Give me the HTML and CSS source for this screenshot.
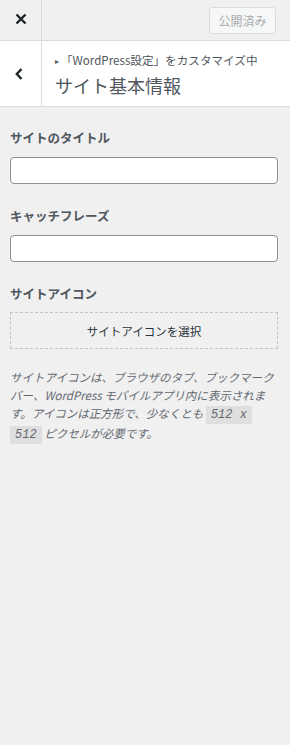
FILE: index.html
```html
<!DOCTYPE html>
<html lang="ja">
<head>
<meta charset="utf-8">
<link rel="stylesheet" href="styles.css">
</head>
<body>
<div class="sidebar">
  <header class="topbar">
    <button class="close-btn" aria-label="閉じる">
      <svg width="14" height="14" viewBox="0 0 14 14"><path d="M2.5 2.5 L11.5 11.5 M11.5 2.5 L2.5 11.5" stroke="#1d2327" stroke-width="2.4" stroke-linecap="butt"/></svg>
    </button>
    <div class="topbar-actions">
      <button class="publish-btn" disabled>公開済み</button>
    </div>
  </header>
  <div class="section-head">
    <button class="back-btn" aria-label="戻る">
      <svg width="10" height="14" viewBox="0 0 10 14"><path d="M7.5 2 L2.8 7 L7.5 12" fill="none" stroke="#1d2327" stroke-width="2.4"/></svg>
    </button>
    <div class="section-title">
      <div class="action"><span class="tri">▸</span>「WordPress設定」をカスタマイズ中</div>
      <h3>サイト基本情報</h3>
    </div>
  </div>
  <div class="controls">
    <div class="control">
      <label class="ctl-label">サイトのタイトル</label>
      <input class="ctl-input" type="text">
    </div>
    <div class="control">
      <label class="ctl-label">キャッチフレーズ</label>
      <input class="ctl-input" type="text">
    </div>
    <div class="control">
      <label class="ctl-label">サイトアイコン</label>
      <div class="upload">サイトアイコンを選択</div>
      <p class="desc">サイトアイコンは、ブラウザのタブ、ブックマークバー、WordPress モバイルアプリ内に表示されます。アイコンは正方形で、少なくとも <code>512 x</code> <code>512</code> ピクセルが必要です。</p>
    </div>
  </div>
</div>
</body>
</html>
```
FILE: styles.css
```css
* { box-sizing: border-box; }
html, body { margin: 0; padding: 0; }
body {
  width: 290px;
  height: 745px;
  background: #f0f0f1;
  font-family: "Noto Sans CJK JP", "Noto Sans", sans-serif;
  color: #2c3338;
  overflow: hidden;
}
.sidebar { display: flex; flex-direction: column; height: 745px; }
.topbar {
  display: flex;
  height: 41px;
  border-bottom: 1px solid #dcdcde;
  background: #f0f0f1;
}
.close-btn {
  width: 42px;
  height: 40px;
  border: 0;
  border-right: 1px solid #dcdcde;
  background: transparent;
  display: flex;
  align-items: center;
  justify-content: center;
  padding: 0 0 2px 0;
}
.topbar-actions {
  flex: 1;
  display: flex;
  justify-content: flex-end;
  align-items: flex-start;
  padding: 7px 14px 0 0;
}
.publish-btn {
  font-family: inherit;
  font-size: 12px;
  color: #a7aaad;
  background: #f6f7f7;
  border: 1px solid #dcdcde;
  border-radius: 3px;
  height: 27px;
  width: 67px;
  padding: 0;
  line-height: 24px;
}
.section-head {
  display: flex;
  height: 66px;
  background: #fff;
  border-bottom: 1px solid #dcdcde;
}
.back-btn {
  width: 42px;
  border: 0;
  border-right: 1px solid #dcdcde;
  background: transparent;
  display: flex;
  align-items: center;
  justify-content: center;
  padding: 0 4px 0 0;
}
.section-title { padding: 10px 0 0 13px; }
.action {
  font-size: 11.6px;
  line-height: 18px;
  color: #50575e;
}
.tri { font-size: 8px; margin-right: 2px; position: relative; top: -1px; }
.section-title h3 {
  margin: 1px 0 0 0;
  font-size: 18px;
  font-weight: 400;
  line-height: 26px;
  color: #50575e;
}
.controls { padding: 22px 12px 0 10px; }
.control { margin-bottom: 23px; }
.ctl-label {
  display: block;
  font-size: 12.5px;
  font-weight: 700;
  line-height: 18px;
  color: #50575e;
  margin-bottom: 10px;
}
.ctl-input {
  display: block;
  width: 100%;
  height: 27px;
  border: 1px solid #8c8f94;
  border-radius: 4px;
  background: #fff;
  margin: 0;
}
.upload {
  height: 37px;
  border: 1px dashed #c3c4c7;
  display: flex;
  align-items: center;
  justify-content: center;
  font-size: 11.5px;
  color: #2c3338;
  margin-top: -1px;
}
.desc {
  margin: 19px 0 0 0;
  font-size: 11.5px;
  line-height: 18px;
  font-style: italic;
  color: #646970;
}
.desc code {
  display: inline-block;
  font-family: "Liberation Mono", monospace;
  font-style: italic;
  font-size: 12px;
  line-height: 18px;
  background: rgba(0,0,0,0.07);
  padding: 0 5px;
}
```
